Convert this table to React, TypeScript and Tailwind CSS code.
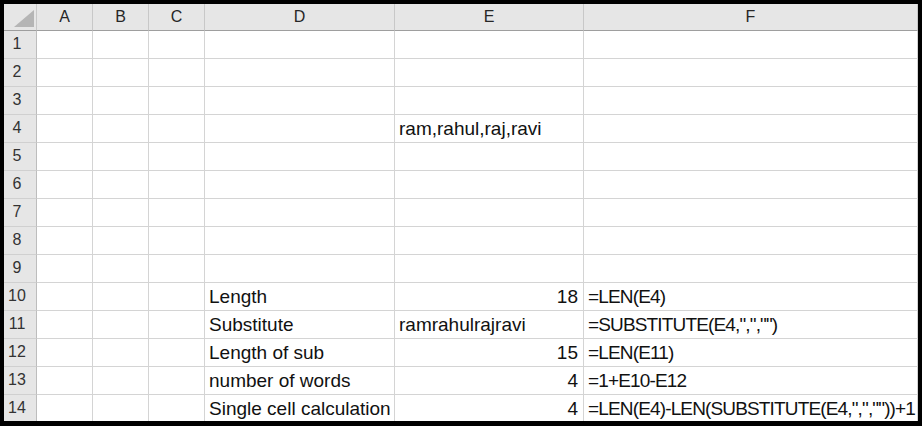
import React from "react";

const cols = ["A", "B", "C", "D", "E", "F"];

type Cell = { t: string; right?: boolean; f?: boolean };
const data: Record<number, Record<string, Cell>> = {
  4: { E: { t: "ram,rahul,raj,ravi" } },
  10: { D: { t: "Length" }, E: { t: "18", right: true }, F: { t: "=LEN(E4)", f: true } },
  11: { D: { t: "Substitute" }, E: { t: "ramrahulrajravi" }, F: { t: '=SUBSTITUTE(E4,",","")', f: true } },
  12: { D: { t: "Length of sub" }, E: { t: "15", right: true }, F: { t: "=LEN(E11)", f: true } },
  13: { D: { t: "number of words" }, E: { t: "4", right: true }, F: { t: "=1+E10-E12", f: true } },
  14: {
    D: { t: "Single cell calculation" },
    E: { t: "4", right: true },
    F: { t: '=LEN(E4)-LEN(SUBSTITUTE(E4,",",""))+1', f: true },
  },
};

export default function App() {
  const rows = Array.from({ length: 14 }, (_, i) => i + 1);
  return (
    <div
      className="w-[922px] h-[426px] bg-black p-[4px] overflow-hidden"
      style={{ fontFamily: '"Liberation Sans", Arial, sans-serif' }}
    >
      <div className="w-[914px] h-[417px] overflow-hidden bg-white">
        <div className="grid grid-cols-[33px_56px_56px_56px_190px_189px_334px]">
          {/* corner */}
          <div className="h-[27px] bg-[#e6e6e6] border-r border-b border-r-[#c8c8c8] border-b-[#9e9e9e] relative">
            <svg className="absolute left-0 top-0" width="33" height="27" viewBox="0 0 33 27">
              <polygon points="30,6 30,23 10,23" fill="#b5b5b5" />
            </svg>
          </div>
          {cols.map((c) => (
            <div
              key={c}
              className="h-[27px] bg-[#e6e6e6] border-r border-b border-r-[#c8c8c8] border-b-[#9e9e9e] flex items-center justify-center text-[16px] text-[#262626]"
            >
              {c}
            </div>
          ))}
          {rows.map((r) => (
            <React.Fragment key={r}>
              <div className="h-[28px] bg-[#e6e6e6] border-r border-b border-r-[#bdbdbd] border-b-[#d0d0d0] flex items-end justify-center pr-[6px] pb-[4px] text-[16px] leading-[20px] text-[#333333]">
                {r}
              </div>
              {cols.map((c) => {
                const cell = data[r]?.[c];
                return (
                  <div
                    key={c}
                    className={`h-[28px] border-r border-b border-[#d4d4d4] text-[19px] leading-[27px] text-[#111111] whitespace-nowrap overflow-visible ${
                      cell?.right ? "text-right pr-[5px]" : "pl-[4px]"
                    } ${cell?.f ? "tracking-[-0.85px]" : ""}`}
                  >
                    {cell?.t ?? ""}
                  </div>
                );
              })}
            </React.Fragment>
          ))}
        </div>
      </div>
    </div>
  );
}
